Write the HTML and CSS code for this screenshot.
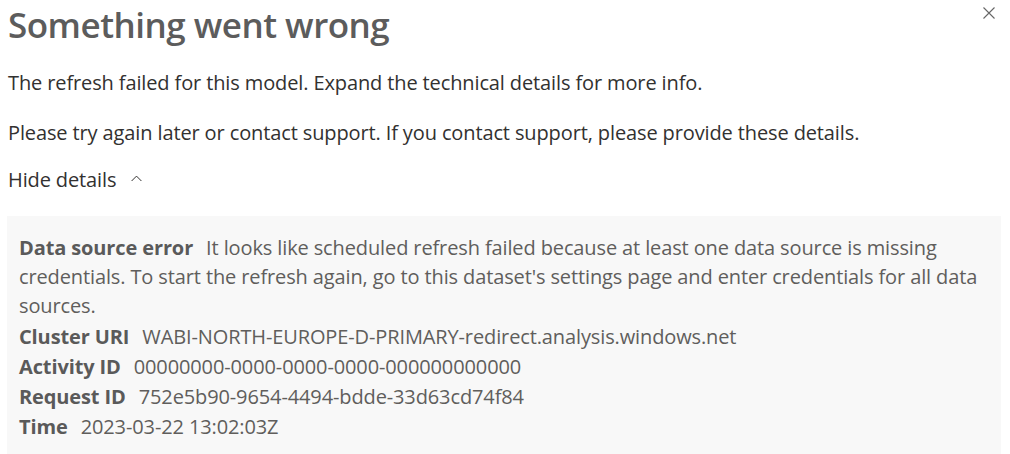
FILE: index.html
```html
<!DOCTYPE html>
<html lang="en">
<head>
<meta charset="utf-8">
<title>Something went wrong</title>
<link rel="stylesheet" href="styles.css">
</head>
<body>
<div class="dialog">
  <div class="header">
    <h1 class="title">Something went wrong</h1>
    <button class="close" aria-label="Close">
      <svg width="12" height="12" viewBox="0 0 12 12"><path d="M0.5 0.5L11.5 11.5M11.5 0.5L0.5 11.5" stroke="#666666" stroke-width="1.1" fill="none"/></svg>
    </button>
  </div>
  <p class="msg">The refresh failed for this model. Expand the technical details for more info.</p>
  <p class="msg second">Please try again later or contact support. If you contact support, please provide these details.</p>
  <div class="toggle">Hide details
    <svg class="chev" width="11" height="7" viewBox="0 0 11 7"><path d="M0.6 6L5.5 1.1L10.4 6" stroke="#323130" stroke-width="1" fill="none"/></svg>
  </div>
  <div class="details">
    <div class="row first"><span class="label">Data source error</span><span class="value">It looks like scheduled refresh failed because at least one data source is missing credentials. To start the refresh again, go to this dataset's settings page and enter credentials for all data sources.</span></div>
    <div class="row"><span class="label">Cluster URI</span><span class="value">WABI-NORTH-EUROPE-D-PRIMARY-redirect.analysis.windows.net</span></div>
    <div class="row"><span class="label">Activity ID</span><span class="value">00000000-0000-0000-0000-000000000000</span></div>
    <div class="row"><span class="label">Request ID</span><span class="value">752e5b90-9654-4494-bdde-33d63cd74f84</span></div>
    <div class="row"><span class="label">Time</span><span class="value">2023-03-22 13:02:03Z</span></div>
  </div>
</div>
</body>
</html>
```
FILE: styles.css
```css
html, body {
  margin: 0;
  padding: 0;
  background: #ffffff;
}
body {
  font-family: "Open Sans", "Noto Sans", sans-serif;
  color: #323130;
}
.dialog {
  padding: 0 9px 0 8px;
}
.header {
  display: flex;
  justify-content: space-between;
  align-items: flex-start;
}
.title {
  margin: 2px 0 0 0;
  font-size: 35px;
  line-height: 46px;
  font-weight: 600;
  color: #5c5c5c;
  letter-spacing: -0.5px;
}
.close {
  border: 0;
  background: transparent;
  padding: 0;
  margin: 7px 6px 0 0;
  width: 12px;
  height: 12px;
  display: flex;
}
.msg {
  margin: 21px 0 0 0;
  font-size: 20px;
  line-height: 28px;
  letter-spacing: -0.12px;
}
.msg.second {
  margin-top: 22px;
}
.toggle {
  margin-top: 19px;
  font-size: 20px;
  line-height: 28px;
  letter-spacing: -0.12px;
  display: flex;
  align-items: center;
}
.chev {
  margin-left: 15px;
  margin-top: -4px;
}
.details {
  margin: 22px 0 0 -1px;
  background: #f8f8f8;
  padding: 17px 12px 15px 12px;
  color: #605e5c;
  font-size: 20px;
  line-height: 30px;
  letter-spacing: -0.12px;
}
.row.first {
  line-height: 29px;
  margin-bottom: 2px;
}
.label {
  font-weight: 700;
  margin-right: 13px;
  color: #5a5a5a;
}
.value {
  color: #605e5c;
}
```
